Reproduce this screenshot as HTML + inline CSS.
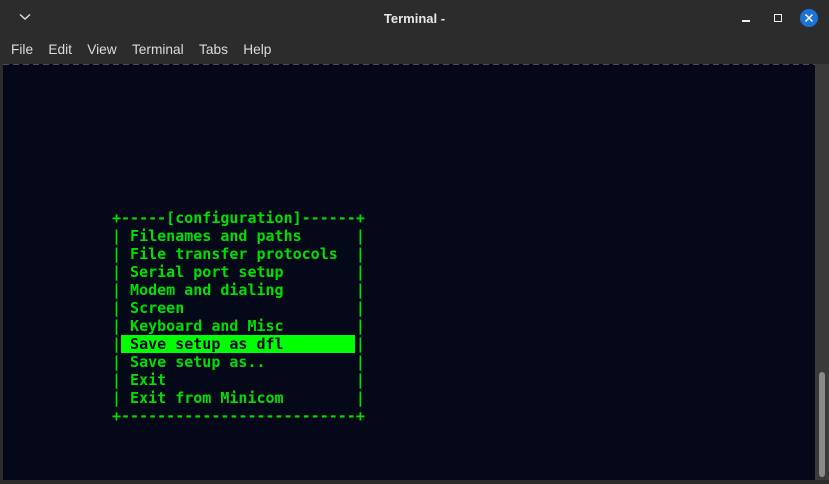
<!DOCTYPE html><html><head><style>
body{margin:0;width:829px;height:484px;background:#2c2c2c;overflow:hidden;font-family:"Liberation Sans",sans-serif;position:relative}
.title{position:absolute;top:11px;left:0;width:829px;text-align:center;color:#e8e8e8;font-weight:bold;font-size:13px}
.menu{position:absolute;top:42px;left:11px;color:#dcdcdc;font-size:13.7px}
.menu span{margin-right:15.3px}
.term{position:absolute;left:3px;top:64px;width:812px;height:416px;background:#050818}
.dash{position:absolute;left:3px;top:64px;width:812px;height:1px;background:repeating-linear-gradient(90deg,#4a4e60 0 6px,transparent 6px 10px)}
.sb{position:absolute;left:815px;top:64px;width:14px;height:416px;background:#3a3a3a}
.thumb{position:absolute;left:819px;top:372px;width:6px;height:105px;border-radius:3px;background:#8a8a8a}
pre{position:absolute;left:112px;top:209px;margin:0;font-family:"DejaVu Sans Mono","Liberation Mono",monospace;font-weight:bold;font-size:15px;line-height:18px;color:#00e000}
.hl{position:absolute;left:121px;top:335px;width:234px;height:18px;background:#00ff00}
</style></head><body>
<svg style="position:absolute;left:19px;top:13px" width="12" height="8"><path d="M1 1.5L6 6L11 1.5" stroke="#ddd" stroke-width="1.5" fill="none"/></svg>
<div class="title">Terminal -</div>
<div style="position:absolute;left:742px;top:20px;width:8px;height:1.5px;background:#eee"></div>
<div style="position:absolute;left:774px;top:14px;width:6px;height:6px;border:1.5px solid #eee"></div>
<svg style="position:absolute;left:800px;top:9px" width="18" height="18"><circle cx="9" cy="9" r="9" fill="#1a73d9"/><path d="M5.5 5.5L12.5 12.5M12.5 5.5L5.5 12.5" stroke="#fff" stroke-width="1.5"/></svg>
<div class="menu"><span>File</span><span>Edit</span><span>View</span><span>Terminal</span><span>Tabs</span><span>Help</span></div>
<div class="term"></div><div class="dash"></div>
<div class="sb"></div><div class="thumb"></div>
<div class="hl"></div>
<pre>+-----[configuration]------+
| Filenames and paths      |
| File transfer protocols  |
| Serial port setup        |
| Modem and dialing        |
| Screen                   |
| Keyboard and Misc        |
|<span style="color:#050818"> Save setup as dfl        </span>|
| Save setup as..          |
| Exit                     |
| Exit from Minicom        |
+--------------------------+</pre>
</body></html>
